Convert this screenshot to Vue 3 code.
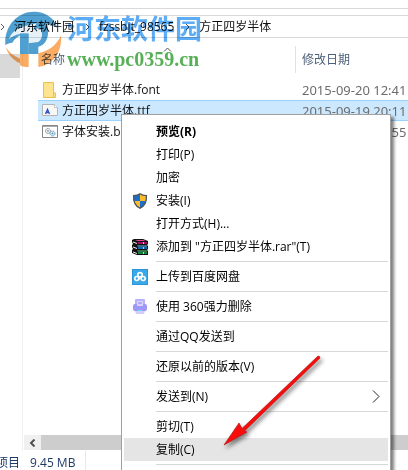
<script setup>
import { ref } from 'vue';

const crumbs = ['河东软件园', 'fzssbjt_98565', '方正四岁半体'];

const files = [
  { name: '方正四岁半体.font', date: '2015-09-20 12:41', icon: 'folder' },
  { name: '方正四岁半体.ttf', date: '2015-09-19 20:11', icon: 'font' },
  { name: '字体安装.bat', date: '2015-09-19 19:55', icon: 'bat' },
];
const selected = ref(1);

// Each group is followed by a separator line.
const groups = [
  [
    { label: '预览(R)', bold: true },
    { label: '打印(P)' },
    { label: '加密' },
    { label: '安装(I)', icon: 'shield' },
    { label: '打开方式(H)...' },
    { label: '添加到 "方正四岁半体.rar"(T)', icon: 'rar' },
  ],
  [{ label: '上传到百度网盘', icon: 'cloud' }],
  [{ label: '使用 360强力删除', icon: 'shred' }],
  [{ label: '通过QQ发送到' }],
  [{ label: '还原以前的版本(V)' }],
  [{ label: '发送到(N)', submenu: true }],
  [{ label: '剪切(T)' }, { label: '复制(C)' }],
];
const active = ref('复制(C)');
</script>

<template>
  <div class="explorer">
    <div class="ribbon"></div>
    <nav class="address">
      <template v-for="c in crumbs" :key="c">
        <svg class="sep" width="5" height="8" viewBox="0 0 5 8"><path d="M1 1l3 3-3 3" fill="none" stroke="#555" /></svg>
        <a href="#">{{ c }}</a>
      </template>
    </nav>

    <div class="body">
      <aside class="tree"><div class="tree-item"></div></aside>
      <main class="pane">
        <table class="files">
          <thead>
            <tr>
              <th class="col-name">
                <div class="head">名称
                  <svg class="sort" width="9" height="5" viewBox="0 0 9 5"><path d="M1 4.500l3.500-3.500 3.500 3.500" fill="none" stroke="#555" /></svg>
                </div>
              </th>
              <th><div class="head last">修改日期</div></th>
            </tr>
          </thead>
          <tbody>
            <tr v-for="(f, i) in files" :key="f.name" :class="{ selected: i === selected }" @click="selected = i">
              <td>
                <div class="name">
                  <svg v-if="f.icon === 'folder'" width="16" height="16" viewBox="0 0 16 16">
                    <path d="M1.500.5h10v10l2 .5v4.500h-12z" fill="#ffe48f" stroke="#e8c14c" />
                    <path d="M11.500 10.500v5" stroke="#e8c14c" />
                  </svg>
                  <svg v-else-if="f.icon === 'font'" width="16" height="16" viewBox="0 0 16 16">
                    <path d="M.5 1.500h12l3 3v8H.5z" fill="#f7f7f7" stroke="#b4b4b4" />
                    <path d="M12.500 1.500v3h3" fill="#fff" stroke="#c4c4c4" />
                    <path d="M3.500 11L5.500 6.500 7.500 11M4.500 9.500h2" fill="none" stroke="#2f55c4" stroke-width="1.400" />
                  </svg>
                  <svg v-else width="16" height="16" viewBox="0 0 16 16">
                    <path d="M.5 1.500h15v12H.5z" fill="#fff" stroke="#858585" />
                    <path d="M1 2.500h14" stroke="#aaa" />
                    <circle cx="6" cy="7" r="2.500" fill="#e8eef2" stroke="#8b979f" stroke-dasharray="1.500 .5" />
                    <circle cx="6" cy="7" r=".8" fill="#777" />
                    <circle cx="10.500" cy="9.500" r="2.500" fill="#cfeaf7" stroke="#6aa3c0" stroke-dasharray="1.500 .5" />
                    <circle cx="10.500" cy="9.500" r=".8" fill="#58869c" />
                  </svg>
                  <span>{{ f.name }}</span>
                </div>
              </td>
              <td class="date">{{ f.date }}</td>
            </tr>
          </tbody>
        </table>
        <div class="hscroll">
          <button type="button" aria-label="向左滚动">
            <svg width="7" height="8" viewBox="0 0 7 8"><path d="M5.500.5L2 4l3.500 3.500" fill="none" stroke="#505050" stroke-width="2" /></svg>
          </button>
          <div class="thumb"></div>
        </div>
      </main>
    </div>

    <footer class="status"><span class="clip">项目</span><span class="size">9.45 MB</span></footer>

    <div class="watermark">
      <svg width="57" height="57" viewBox="15 31 171 171">
        <path d="M16 133C12 78 50 33 102 33c34 0 60 18 70 48-8-6-18-9-30-9 8 34-4 62-27 66v22H85V98c-22 2-38 12-48 28-8 0-15 3-21 7z" fill="#3c96cb" />
        <path d="M85 90l34-8c10 12 10 32-4 42l-30 4z" fill="#fff" opacity=".85" />
        <path d="M26 116c10-24 30-38 60-42l24-6-20 32H60c-14 2-25 8-34 16z" fill="#fff" opacity=".85" />
        <path d="M60 98h26v62H60z" fill="#3c96cb" />
        <path d="M60 160h26v38c-10 2-18 0-26-4zM18 140c8 14 22 26 42 34v14c-22-10-38-28-42-48z" fill="#fba353" />
        <path d="M183 105c4 48-24 88-68 94v-42c32-6 54-24 68-52z" fill="#fba353" />
      </svg>
      <div class="mark-text">
        <strong class="mark-name">河东软件园</strong>
        <strong class="mark-url">www.pc0359.cn</strong>
      </div>
    </div>

    <div class="menu" role="menu">
      <div v-for="(g, gi) in groups" :key="gi" class="group">
        <button
          v-for="m in g"
          :key="m.label"
          type="button"
          role="menuitem"
          class="item"
          :class="{ bold: m.bold, active: m.label === active }"
          @mouseenter="active = m.label"
        >
          <span class="icon">
            <svg v-if="m.icon === 'shield'" width="16" height="16" viewBox="0 0 16 16">
              <path d="M8 .5C6 2 3.500 2.500 1.500 2.500 1 9 3 13 8 15.500 13 13 15 9 14.500 2.500 12.500 2.500 10 2 8 .5z" fill="#1b6fc9" />
              <path d="M8 .5c2 1.500 4.500 2 6.500 2 .2 2 .1 3.700-.3 5.500H8zM8 8v7.500C4.500 13.700 2.500 11.200 1.800 8z" fill="#fdbc2c" />
              <path d="M8 .8C6 2.200 3.500 2.600 1.600 2.700 1.200 9 3 12.800 8 15.200c5-2.400 6.800-6.200 6.400-12.500C12.500 2.600 10 2.200 8 .8z" fill="none" stroke="#50575f" stroke-width="1.300" />
            </svg>
            <svg v-else-if="m.icon === 'rar'" width="16" height="16" viewBox="0 0 16 16">
              <path d="M2 0h9l5 2v3l-1 1 1 1v3l-1 1 1 1v4H5l-5-2v-3l1-1-1-2V6l1-1-1-2V1z" fill="#111" />
              <path d="M3 1h8l3 1H6z" fill="#e0489c" /><path d="M6 3h9v2H6z" fill="#a0105f" />
              <path d="M5 6.500h10v1H6z" fill="#6fc0f5" /><path d="M6 8h9v2H6z" fill="#0f68b4" />
              <path d="M5 11.500h10v1H6z" fill="#5fd08a" /><path d="M6 13h9v2H6z" fill="#12803c" />
              <path d="M1 3l4 1.500M1 8l4 1.500M1 13l4 1.500" stroke="#eee" />
              <path d="M11 3h1v2h-1zM11 8h1v2h-1zM11 13h1v2h-1z" fill="#e8d264" />
            </svg>
            <svg v-else-if="m.icon === 'cloud'" width="16" height="16" viewBox="0 0 16 16">
              <path d="M0 0h16v16H0z" fill="#2b95da" /><path d="M1 1h14v14H1z" fill="#3ba9e9" />
              <g fill="none" stroke="#fff" stroke-width="1.600">
                <circle cx="8" cy="5.800" r="2.200" /><circle cx="4.800" cy="9.500" r="2" /><circle cx="11.200" cy="9.500" r="2" />
              </g>
              <path d="M6.300 10.800l3-3" stroke="#fff" stroke-width="1.500" />
            </svg>
            <svg v-else-if="m.icon === 'shred'" width="16" height="16" viewBox="0 0 16 16">
              <rect x="3" y="0" width="10" height="7" rx="1" fill="#b8b0fb" />
              <rect x="1" y="5" width="14" height="7" rx="2" fill="#9f97f8" />
              <path d="M5 2h6v5H5z" fill="#d8d4ff" /><path d="M6 4h4" stroke="#8b80ee" />
              <path d="M3 12h10l-1 3H4z" fill="#d3cefd" /><path d="M6 11h4v1H6z" fill="#5ee1f3" />
            </svg>
          </span>
          <span class="label">{{ m.label }}</span>
          <svg v-if="m.submenu" class="more" width="8" height="13" viewBox="0 0 8 13"><path d="M1 .5l6 6-6 6" fill="none" stroke="#222" /></svg>
        </button>
      </div>
    </div>

    <svg class="pointer" width="108" height="102" viewBox="0 0 108 102">
      <path d="M4 93L19 71l3 5.500L98 4q2 0 2 2L24.500 79l2.500 1z" fill="#f80d0d" stroke="#b11717" stroke-width=".7" />
    </svg>
  </div>
</template>

<style>
body { margin: 0; background: #fff; }
</style>

<style scoped>
.explorer {
  position: relative;
  display: flex;
  flex-direction: column;
  height: 100vh;
  overflow: hidden;
  background: #fff;
  color: #111;
  font: 12px/16px "Open Sans", "Noto Sans CJK SC", sans-serif;
}
.ribbon { height: 8px; flex: none; border-bottom: 1px solid #d9d9d9; }
.address {
  display: flex;
  align-items: center;
  flex: none;
  height: 21px;
  margin-top: 6px;
  border: solid #d9d9d9;
  border-width: 1px 0;
  white-space: nowrap;
}
.address a { color: inherit; text-decoration: none; margin: 0 11px 0 9px; }
.address .sep { flex: none; }

.body { display: flex; flex: 1; min-height: 0; }
.tree { flex: none; width: 22px; margin-top: 14px; border-right: 1px solid #f0f0f0; }
.tree-item { width: 20px; height: 24px; margin-top: 2px; background: #d9d9d9; }
.pane { flex: 1; min-width: 0; display: flex; flex-direction: column; justify-content: space-between; padding: 8px 0 1px 1px; }

.files { table-layout: fixed; width: calc(100% - 14px); border-spacing: 0; margin-left: 14px; }
.files th, .files td { padding: 0; text-align: left; }
.files th { height: 33px; vertical-align: top; font-weight: normal; color: #4c607a; }
.files .col-name { width: 258px; }
.head { position: relative; line-height: 27px; padding-left: 3px; border-right: 1px solid #e2e2e2; }
.head.last { border: 0; padding-left: 6px; }
.sort { position: absolute; top: 1px; left: 50%; margin-left: -4px; }
.files td { box-sizing: border-box; height: 21px; border: solid transparent; border-width: 1px 0; white-space: nowrap; }
.name { display: flex; align-items: center; gap: 4px; padding-left: 4px; }
.name svg { flex: none; }
.files .date { color: #6d6d6d; padding-left: 6px; font-size: 13px; font-family: "Noto Sans", sans-serif; }
.files .selected td { background: #cce8ff; border-color: #99d1ff; }

.hscroll { display: flex; height: 15px; background: #f0f0f0; }
.hscroll button { width: 17px; padding: 0; border: 0; background: none; display: grid; place-items: center; }
.thumb { flex: 1; background: #cdcdcd; }

.status { display: flex; flex: none; height: 19px; line-height: 24px; color: #1e3a68; }
.clip { margin-left: -4px; }
.size { margin-left: 10px; padding-right: 10px; border-right: 1px solid #e8e8e8; }

.watermark { position: absolute; top: 11px; left: 5px; display: flex; gap: 5px; opacity: .9; mix-blend-mode: multiply; pointer-events: none; }
.mark-text { display: flex; flex-direction: column; white-space: nowrap; }
.mark-name { color: #4aa3f5; font-size: 27px; line-height: 36px; }
.mark-url { color: #45a845; font: bold 20px/24px "Liberation Serif", serif; }

.menu {
  position: absolute;
  top: 114px;
  left: 121px;
  width: 264px;
  padding: 5px 2px 12px;
  background: #fff;
  border: 1px solid #a0a0a0;
  box-shadow: 3px 3px 3px rgba(0, 0, 0, .5);
}
.group { display: flex; flex-direction: column; }
.group::after { content: ""; height: 1px; margin: 3px 0 3px 32px; background: #d7d7d7; }
.item {
  display: flex;
  align-items: center;
  height: 23px;
  padding: 0 8px;
  border: 0;
  background: none;
  color: #000;
  font: inherit;
  text-align: left;
  white-space: nowrap;
}
.item.bold { font-weight: bold; }
.item.active { background: #e5e5e5; }
.icon { display: flex; width: 24px; }
.label { flex: 1; }

.pointer { position: absolute; top: 352px; left: 220px; filter: drop-shadow(2px 3px 2px rgba(0, 0, 0, .5)); pointer-events: none; }
</style>
